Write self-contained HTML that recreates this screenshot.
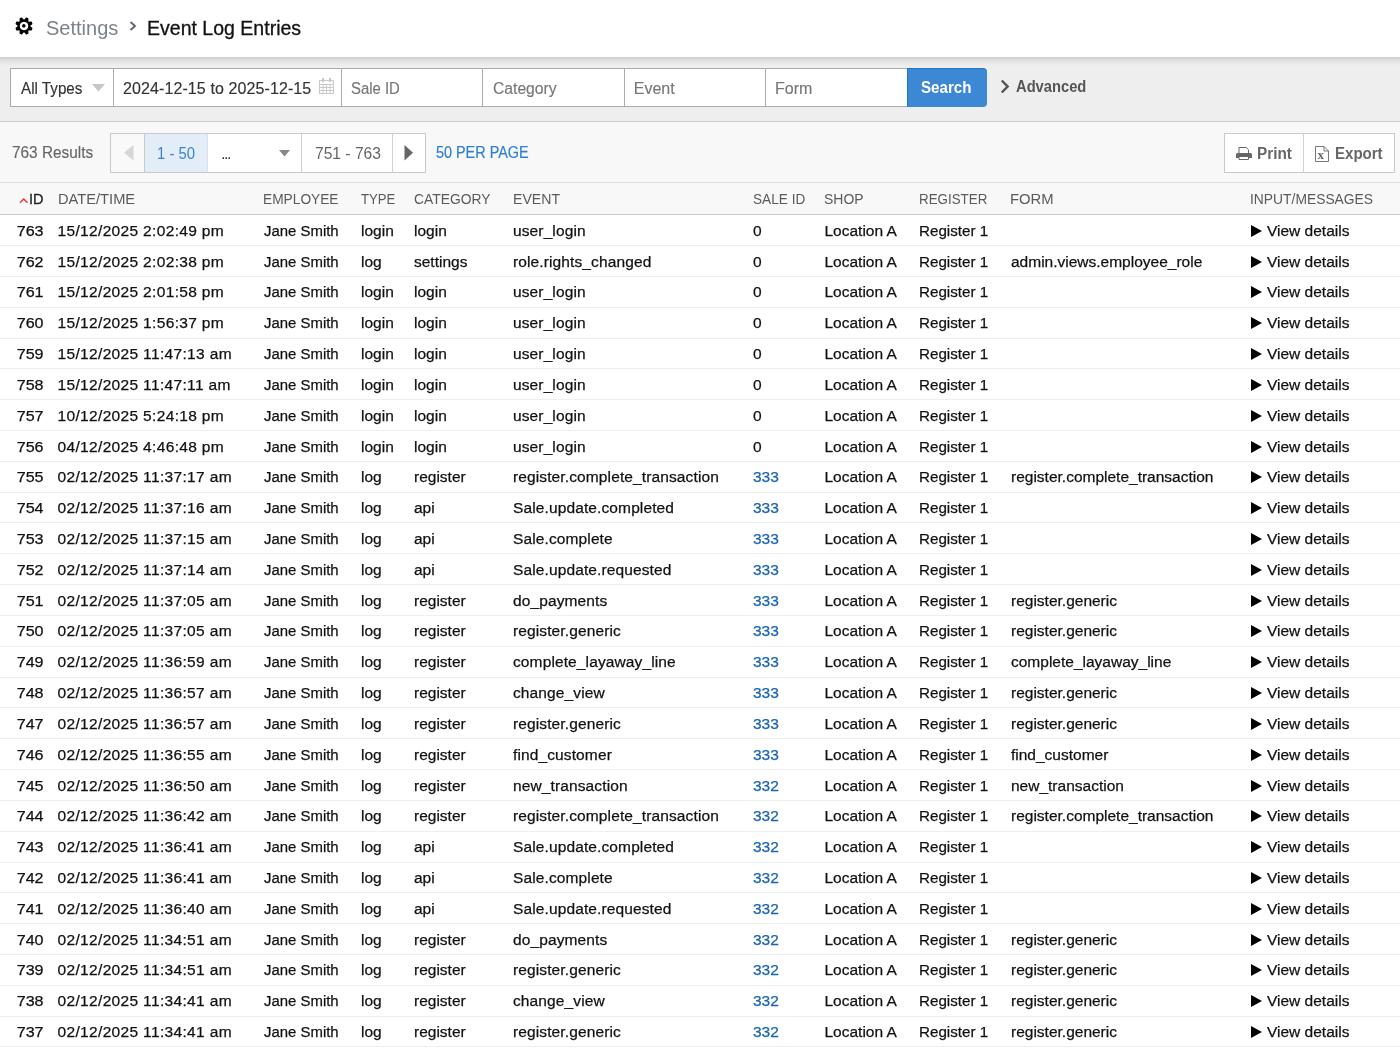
<!DOCTYPE html>
<html>
<head>
<meta charset="utf-8">
<style>
html, body { margin:0; padding:0; }
body { -webkit-font-smoothing:antialiased; will-change:transform; width:1400px; height:1048px; overflow:hidden; position:relative; background:#fff;
  font-family:"Liberation Sans", sans-serif; color:#222; }
.abs { position:absolute; white-space:nowrap; }

/* top header */
#top { position:absolute; left:0; top:0; width:1400px; height:57px; background:#fff; }
#gear { position:absolute; left:15.2px; top:17.2px; width:18px; height:18px; }
#crumb1 { left:46px; top:15px; font-size:20px; line-height:26px; color:#7b8388; }
#chev { position:absolute; left:128px; top:20px; width:10px; height:12px; }
#crumb2 { left:146.5px; top:15px; font-size:20px; line-height:26px; color:#111; -webkit-text-stroke:0.3px #111; transform:scaleX(0.976); transform-origin:0 50%; }

/* filter bar */
#filter { position:absolute; left:0; top:57px; width:1400px; height:64px; background:#eeeeee;
  border-bottom:1px solid #cdcdcd; }
#filter .shadow { position:absolute; left:0; top:0; width:1400px; height:9px;
  background:linear-gradient(to bottom, rgba(0,0,0,0.14), rgba(0,0,0,0.05) 40%, rgba(0,0,0,0)); }
.inp { position:absolute; top:11px; height:39px; background:#fff; border:1px solid #ababab; box-sizing:border-box; }
.inp span { position:absolute; top:0.6px; line-height:37px; font-size:16px; white-space:nowrap; -webkit-text-stroke:0.15px currentColor; }
.ph { color:#777; }
.sx { transform-origin:0 50%; }
#btn-search { position:absolute; left:907px; top:11px; width:80px; height:39px; background:#3d88d5; box-sizing:border-box;
  border-top:1px solid #1f78cf; border-left:1px solid #1f78cf;
  border-radius:0 4px 4px 0; color:#fff; font-weight:bold; font-size:17px; line-height:38px; }
#adv { left:1016px; top:17px; font-size:16px; font-weight:bold; line-height:26px; color:#555; }
#adv-chev { position:absolute; left:1000px; top:22px; width:10px; height:15px; }

/* results bar */
#results { position:absolute; left:0; top:122px; width:1400px; height:60px; background:#f8f8f8;
  border-bottom:1px solid #dedede; }
#rescount { left:12px; top:20px; font-size:16px; line-height:22px; color:#666; -webkit-text-stroke:0.15px #666; }
#pager { position:absolute; left:110px; top:11px; width:314px; height:38px; border:1px solid #c9c9c9; background:#fff; }
.pc { position:absolute; top:0; height:38px; line-height:38px; font-size:16px; white-space:nowrap; box-sizing:border-box; }
#perpage { left:436px; top:20px; font-size:16px; line-height:22px; color:#2f7fd0; -webkit-text-stroke:0.2px #2f7fd0; }
#pe { position:absolute; left:1224px; top:11px; width:169px; height:38px; border:1px solid #c9c9c9; background:#fff; }

/* table header */
#thead { position:absolute; left:0; top:183px; width:1400px; height:31px; background:#f8f8f8;
  border-bottom:1px solid #cccccc; }
.th { position:absolute; top:0; line-height:31px; font-size:15px; color:#5a5a5a; white-space:nowrap; transform-origin:0 50%; }

/* rows */
.row { position:absolute; left:0; width:1400px; height:29.82px; border-bottom:1px solid #efefef; background:#fff; }
.c { position:absolute; top:0.5px; line-height:29.82px; font-size:15.5px; color:#111; white-space:nowrap; -webkit-text-stroke:0.25px #111; }
.c-id { left:0; width:43.6px; text-align:right; transform:scaleX(1.04); transform-origin:100% 50%; }
.c-dt { left:57.5px; letter-spacing:0.34px; }
.c-emp { left:264px; transform:scaleX(0.963); transform-origin:0 50%; }
.c-type { left:361px; }
.c-cat { left:414px; }
.c-ev { left:513px; letter-spacing:0.12px; }
.c-sale { left:753px; }
.c-sale.blue { color:#1a64b3; -webkit-text-stroke-color:#1a64b3; }
.c-shop { left:824.5px; }
.c-reg { left:919px; transform:scaleX(0.98); transform-origin:0 50%; }
.c-form { left:1011px; }
.c-in { left:1251px; }
.tri { display:inline-block; width:0; height:0; border-top:6.5px solid transparent; border-bottom:6.5px solid transparent;
  border-left:11.5px solid #000; margin-right:5px; vertical-align:-1px; }
</style>
</head>
<body>
<div id="top">
  <svg id="gear" viewBox="0 0 20 20">
    <path fill="#000" stroke="#000" stroke-width="1.3" stroke-linejoin="round" fill-rule="evenodd" d="M10.75 3.44 L12.58 1.27 L14.34 2.00 L14.11 4.83 L15.17 5.89 L18.00 5.66 L18.73 7.42 L16.56 9.25 L16.56 10.75 L18.73 12.58 L18.00 14.34 L15.17 14.11 L14.11 15.17 L14.34 18.00 L12.58 18.73 L10.75 16.56 L9.25 16.56 L7.42 18.73 L5.66 18.00 L5.89 15.17 L4.83 14.11 L2.00 14.34 L1.27 12.58 L3.44 10.75 L3.44 9.25 L1.27 7.42 L2.00 5.66 L4.83 5.89 L5.89 4.83 L5.66 2.00 L7.42 1.27 L9.25 3.44Z M10 4.6 a5.4 5.4 0 1 0 0.001 0z M9.8 8.5 a1.3 1.3 0 1 1 -0.001 0z"/>
  </svg>
  <span id="crumb1" class="abs">Settings</span>
  <svg id="chev" viewBox="0 0 10 12"><path d="M2.5 2 L7 6 L2.5 10" fill="none" stroke="#5d6673" stroke-width="1.9"/></svg>
  <span id="crumb2" class="abs">Event Log Entries</span>
</div>

<div id="filter">
  <div class="shadow"></div>
  <div class="inp" style="left:10px; width:104px;"><span class="sx" style="left:10px; color:#333; transform:scaleX(0.95);">All Types</span>
    <svg style="position:absolute; left:81px; top:15px;" width="13" height="8" viewBox="0 0 13 8"><path d="M0 0 H13 L6.5 7.5z" fill="#c6c6c6"/></svg>
  </div>
  <div class="inp" style="left:113px; width:229px;"><span style="left:9px; color:#333; letter-spacing:0.1px;">2024-12-15 to 2025-12-15</span>
    <svg style="position:absolute; left:205px; top:9px;" width="15" height="16" viewBox="0 0 15 16">
      <g fill="none" stroke="#c8c8c8" stroke-width="1"><rect x="0.5" y="2.5" width="14" height="13"/><path d="M0.5 6.5H14.5M0.5 9.5H14.5M0.5 12.5H14.5M4 6.5V15.5M7.5 6.5V15.5M11 6.5V15.5"/></g>
      <rect x="3" y="0" width="2" height="4" fill="#c8c8c8"/><rect x="10" y="0" width="2" height="4" fill="#c8c8c8"/>
    </svg>
  </div>
  <div class="inp" style="left:341px; width:142px;"><span class="ph sx" style="left:9.3px; transform:scaleX(0.93);">Sale ID</span></div>
  <div class="inp" style="left:482px; width:143px;"><span class="ph sx" style="left:9.5px; transform:scaleX(0.98);">Category</span></div>
  <div class="inp" style="left:624px; width:142px;"><span class="ph" style="left:8.8px;">Event</span></div>
  <div class="inp" style="left:765px; width:143px;"><span class="ph" style="left:9px;">Form</span></div>
  <div id="btn-search"><span class="sx" style="position:absolute; left:13px; top:-0.5px; transform:scaleX(0.89);">Search</span></div>
  <svg id="adv-chev" viewBox="0 0 10 15"><path d="M1.8 1.5 L7.6 7.5 L1.8 13.5" fill="none" stroke="#555" stroke-width="2.5"/></svg>
  <span id="adv" class="abs sx" style="transform:scaleX(0.92);">Advanced</span>
</div>

<div id="results">
  <span id="rescount" class="abs sx" style="transform:scaleX(0.96);">763 Results</span>
  <div id="pager">
    <div class="pc" style="left:0; width:34px; background:#f9f9f9; border-right:1px solid #c9c9c9;">
      <svg style="position:absolute; left:12.5px; top:11px;" width="10" height="16" viewBox="0 0 10 16"><path d="M9.5 0 V15.5 L0 7.75z" fill="#d6d6d6"/></svg>
    </div>
    <div class="pc" style="left:34px; width:63px; background:#e3edf8; color:#3a84cc; text-align:center; border-right:1px solid #d9e1ea;"><span class="sx" style="position:absolute; left:12px; top:1px; transform:scaleX(0.93);">1 - 50</span></div>
    <div class="pc" style="left:97px; width:94px; background:#fff; color:#333;"><span style="position:absolute; left:13px; top:1px; letter-spacing:-1.4px;">...</span>
      <svg style="position:absolute; left:70.5px; top:16px;" width="11" height="7" viewBox="0 0 11 7"><path d="M0 0 H11 L5.5 6.5z" fill="#888"/></svg>
    </div>
    <div class="pc" style="left:190px; width:92px; background:#fff; color:#666; border-left:1px solid #d0d0d0; border-right:1px solid #d0d0d0;"><span class="sx" style="position:absolute; left:12.5px; top:1px; transform:scaleX(0.975);">751 - 763</span></div>
    <div class="pc" style="left:282px; width:32px; background:#fff;">
      <svg style="position:absolute; left:11px; top:11px;" width="10" height="16" viewBox="0 0 10 16"><path d="M0.5 0 V15.5 L9 7.75z" fill="#666"/></svg>
    </div>
  </div>
  <span id="perpage" class="abs sx" style="transform:scaleX(0.9);">50 PER PAGE</span>
  <div id="pe">
    <div class="pc" style="left:0; width:79px; border-right:1px solid #d0d0d0; color:#666; font-weight:bold;">
      <svg style="position:absolute; left:11px; top:13px;" width="16" height="14" viewBox="0 0 16 14">
        <path d="M3 6.5V0.5H10.2L12.5 2.8V6.5" fill="none" stroke="#666" stroke-width="1"/>
        <path fill="#666" d="M1.5 6h13a1.5 1.5 0 0 1 1.5 1.5V11H0V7.5A1.5 1.5 0 0 1 1.5 6z"/>
        <path d="M3 10V12.5H12.5V10" fill="#fff" stroke="#666" stroke-width="1"/>
      </svg>
      <span class="sx" style="position:absolute; left:32px; top:1px; transform:scaleX(0.956);">Print</span>
    </div>
    <div class="pc" style="left:80px; width:90px; color:#666; font-weight:bold;">
      <svg style="position:absolute; left:10px; top:12px;" width="14" height="16" viewBox="0 0 14 16">
        <path d="M0.5 0.5H9L13.5 5V15.5H0.5z M9 0.5V5H13.5" fill="none" stroke="#777" stroke-width="1"/>
        <text x="2.6" y="13.2" font-family="Liberation Serif" font-size="13" fill="#666">x</text>
      </svg>
      <span class="sx" style="position:absolute; left:30px; top:1px; transform:scaleX(0.94);">Export</span>
    </div>
  </div>
</div>

<div id="thead">
  <svg style="position:absolute; left:19px; top:14px;" width="10" height="7" viewBox="0 0 10 7"><path d="M0.9 5.8 L4.7 2 L8.5 5.8" fill="none" stroke="#f5363a" stroke-width="1.45"/></svg>
  <span class="th" style="left:28.5px; color:#222; -webkit-text-stroke:0.3px #222; transform:scaleX(0.97);">ID</span>
  <span class="th" style="left:57.5px; transform:scaleX(0.978);">DATE/TIME</span>
  <span class="th" style="left:263px; transform:scaleX(0.915);">EMPLOYEE</span>
  <span class="th" style="left:361px; transform:scaleX(0.877);">TYPE</span>
  <span class="th" style="left:414px; transform:scaleX(0.924);">CATEGORY</span>
  <span class="th" style="left:512.5px; transform:scaleX(0.941);">EVENT</span>
  <span class="th" style="left:752.5px; transform:scaleX(0.909);">SALE ID</span>
  <span class="th" style="left:823.5px; transform:scaleX(0.931);">SHOP</span>
  <span class="th" style="left:918.5px; transform:scaleX(0.891);">REGISTER</span>
  <span class="th" style="left:1010px; transform:scaleX(0.988);">FORM</span>
  <span class="th" style="left:1249.5px; transform:scaleX(0.923);">INPUT/MESSAGES</span>
</div>

<div class="row" style="top:215.300px"><span class="c c-id">763</span><span class="c c-dt">15/12/2025 2:02:49 pm</span><span class="c c-emp">Jane Smith</span><span class="c c-type">login</span><span class="c c-cat">login</span><span class="c c-ev">user_login</span><span class="c c-sale">0</span><span class="c c-shop">Location A</span><span class="c c-reg">Register 1</span><span class="c c-form"></span><span class="c c-in"><i class="tri"></i>View details</span></div>
<div class="row" style="top:246.120px"><span class="c c-id">762</span><span class="c c-dt">15/12/2025 2:02:38 pm</span><span class="c c-emp">Jane Smith</span><span class="c c-type">log</span><span class="c c-cat">settings</span><span class="c c-ev">role.rights_changed</span><span class="c c-sale">0</span><span class="c c-shop">Location A</span><span class="c c-reg">Register 1</span><span class="c c-form">admin.views.employee_role</span><span class="c c-in"><i class="tri"></i>View details</span></div>
<div class="row" style="top:276.940px"><span class="c c-id">761</span><span class="c c-dt">15/12/2025 2:01:58 pm</span><span class="c c-emp">Jane Smith</span><span class="c c-type">login</span><span class="c c-cat">login</span><span class="c c-ev">user_login</span><span class="c c-sale">0</span><span class="c c-shop">Location A</span><span class="c c-reg">Register 1</span><span class="c c-form"></span><span class="c c-in"><i class="tri"></i>View details</span></div>
<div class="row" style="top:307.760px"><span class="c c-id">760</span><span class="c c-dt">15/12/2025 1:56:37 pm</span><span class="c c-emp">Jane Smith</span><span class="c c-type">login</span><span class="c c-cat">login</span><span class="c c-ev">user_login</span><span class="c c-sale">0</span><span class="c c-shop">Location A</span><span class="c c-reg">Register 1</span><span class="c c-form"></span><span class="c c-in"><i class="tri"></i>View details</span></div>
<div class="row" style="top:338.580px"><span class="c c-id">759</span><span class="c c-dt">15/12/2025 11:47:13 am</span><span class="c c-emp">Jane Smith</span><span class="c c-type">login</span><span class="c c-cat">login</span><span class="c c-ev">user_login</span><span class="c c-sale">0</span><span class="c c-shop">Location A</span><span class="c c-reg">Register 1</span><span class="c c-form"></span><span class="c c-in"><i class="tri"></i>View details</span></div>
<div class="row" style="top:369.400px"><span class="c c-id">758</span><span class="c c-dt">15/12/2025 11:47:11 am</span><span class="c c-emp">Jane Smith</span><span class="c c-type">login</span><span class="c c-cat">login</span><span class="c c-ev">user_login</span><span class="c c-sale">0</span><span class="c c-shop">Location A</span><span class="c c-reg">Register 1</span><span class="c c-form"></span><span class="c c-in"><i class="tri"></i>View details</span></div>
<div class="row" style="top:400.220px"><span class="c c-id">757</span><span class="c c-dt">10/12/2025 5:24:18 pm</span><span class="c c-emp">Jane Smith</span><span class="c c-type">login</span><span class="c c-cat">login</span><span class="c c-ev">user_login</span><span class="c c-sale">0</span><span class="c c-shop">Location A</span><span class="c c-reg">Register 1</span><span class="c c-form"></span><span class="c c-in"><i class="tri"></i>View details</span></div>
<div class="row" style="top:431.040px"><span class="c c-id">756</span><span class="c c-dt">04/12/2025 4:46:48 pm</span><span class="c c-emp">Jane Smith</span><span class="c c-type">login</span><span class="c c-cat">login</span><span class="c c-ev">user_login</span><span class="c c-sale">0</span><span class="c c-shop">Location A</span><span class="c c-reg">Register 1</span><span class="c c-form"></span><span class="c c-in"><i class="tri"></i>View details</span></div>
<div class="row" style="top:461.860px"><span class="c c-id">755</span><span class="c c-dt">02/12/2025 11:37:17 am</span><span class="c c-emp">Jane Smith</span><span class="c c-type">log</span><span class="c c-cat">register</span><span class="c c-ev">register.complete_transaction</span><span class="c c-sale blue">333</span><span class="c c-shop">Location A</span><span class="c c-reg">Register 1</span><span class="c c-form">register.complete_transaction</span><span class="c c-in"><i class="tri"></i>View details</span></div>
<div class="row" style="top:492.680px"><span class="c c-id">754</span><span class="c c-dt">02/12/2025 11:37:16 am</span><span class="c c-emp">Jane Smith</span><span class="c c-type">log</span><span class="c c-cat">api</span><span class="c c-ev">Sale.update.completed</span><span class="c c-sale blue">333</span><span class="c c-shop">Location A</span><span class="c c-reg">Register 1</span><span class="c c-form"></span><span class="c c-in"><i class="tri"></i>View details</span></div>
<div class="row" style="top:523.500px"><span class="c c-id">753</span><span class="c c-dt">02/12/2025 11:37:15 am</span><span class="c c-emp">Jane Smith</span><span class="c c-type">log</span><span class="c c-cat">api</span><span class="c c-ev">Sale.complete</span><span class="c c-sale blue">333</span><span class="c c-shop">Location A</span><span class="c c-reg">Register 1</span><span class="c c-form"></span><span class="c c-in"><i class="tri"></i>View details</span></div>
<div class="row" style="top:554.320px"><span class="c c-id">752</span><span class="c c-dt">02/12/2025 11:37:14 am</span><span class="c c-emp">Jane Smith</span><span class="c c-type">log</span><span class="c c-cat">api</span><span class="c c-ev">Sale.update.requested</span><span class="c c-sale blue">333</span><span class="c c-shop">Location A</span><span class="c c-reg">Register 1</span><span class="c c-form"></span><span class="c c-in"><i class="tri"></i>View details</span></div>
<div class="row" style="top:585.140px"><span class="c c-id">751</span><span class="c c-dt">02/12/2025 11:37:05 am</span><span class="c c-emp">Jane Smith</span><span class="c c-type">log</span><span class="c c-cat">register</span><span class="c c-ev">do_payments</span><span class="c c-sale blue">333</span><span class="c c-shop">Location A</span><span class="c c-reg">Register 1</span><span class="c c-form">register.generic</span><span class="c c-in"><i class="tri"></i>View details</span></div>
<div class="row" style="top:615.960px"><span class="c c-id">750</span><span class="c c-dt">02/12/2025 11:37:05 am</span><span class="c c-emp">Jane Smith</span><span class="c c-type">log</span><span class="c c-cat">register</span><span class="c c-ev">register.generic</span><span class="c c-sale blue">333</span><span class="c c-shop">Location A</span><span class="c c-reg">Register 1</span><span class="c c-form">register.generic</span><span class="c c-in"><i class="tri"></i>View details</span></div>
<div class="row" style="top:646.780px"><span class="c c-id">749</span><span class="c c-dt">02/12/2025 11:36:59 am</span><span class="c c-emp">Jane Smith</span><span class="c c-type">log</span><span class="c c-cat">register</span><span class="c c-ev">complete_layaway_line</span><span class="c c-sale blue">333</span><span class="c c-shop">Location A</span><span class="c c-reg">Register 1</span><span class="c c-form">complete_layaway_line</span><span class="c c-in"><i class="tri"></i>View details</span></div>
<div class="row" style="top:677.600px"><span class="c c-id">748</span><span class="c c-dt">02/12/2025 11:36:57 am</span><span class="c c-emp">Jane Smith</span><span class="c c-type">log</span><span class="c c-cat">register</span><span class="c c-ev">change_view</span><span class="c c-sale blue">333</span><span class="c c-shop">Location A</span><span class="c c-reg">Register 1</span><span class="c c-form">register.generic</span><span class="c c-in"><i class="tri"></i>View details</span></div>
<div class="row" style="top:708.420px"><span class="c c-id">747</span><span class="c c-dt">02/12/2025 11:36:57 am</span><span class="c c-emp">Jane Smith</span><span class="c c-type">log</span><span class="c c-cat">register</span><span class="c c-ev">register.generic</span><span class="c c-sale blue">333</span><span class="c c-shop">Location A</span><span class="c c-reg">Register 1</span><span class="c c-form">register.generic</span><span class="c c-in"><i class="tri"></i>View details</span></div>
<div class="row" style="top:739.240px"><span class="c c-id">746</span><span class="c c-dt">02/12/2025 11:36:55 am</span><span class="c c-emp">Jane Smith</span><span class="c c-type">log</span><span class="c c-cat">register</span><span class="c c-ev">find_customer</span><span class="c c-sale blue">333</span><span class="c c-shop">Location A</span><span class="c c-reg">Register 1</span><span class="c c-form">find_customer</span><span class="c c-in"><i class="tri"></i>View details</span></div>
<div class="row" style="top:770.060px"><span class="c c-id">745</span><span class="c c-dt">02/12/2025 11:36:50 am</span><span class="c c-emp">Jane Smith</span><span class="c c-type">log</span><span class="c c-cat">register</span><span class="c c-ev">new_transaction</span><span class="c c-sale blue">332</span><span class="c c-shop">Location A</span><span class="c c-reg">Register 1</span><span class="c c-form">new_transaction</span><span class="c c-in"><i class="tri"></i>View details</span></div>
<div class="row" style="top:800.880px"><span class="c c-id">744</span><span class="c c-dt">02/12/2025 11:36:42 am</span><span class="c c-emp">Jane Smith</span><span class="c c-type">log</span><span class="c c-cat">register</span><span class="c c-ev">register.complete_transaction</span><span class="c c-sale blue">332</span><span class="c c-shop">Location A</span><span class="c c-reg">Register 1</span><span class="c c-form">register.complete_transaction</span><span class="c c-in"><i class="tri"></i>View details</span></div>
<div class="row" style="top:831.700px"><span class="c c-id">743</span><span class="c c-dt">02/12/2025 11:36:41 am</span><span class="c c-emp">Jane Smith</span><span class="c c-type">log</span><span class="c c-cat">api</span><span class="c c-ev">Sale.update.completed</span><span class="c c-sale blue">332</span><span class="c c-shop">Location A</span><span class="c c-reg">Register 1</span><span class="c c-form"></span><span class="c c-in"><i class="tri"></i>View details</span></div>
<div class="row" style="top:862.520px"><span class="c c-id">742</span><span class="c c-dt">02/12/2025 11:36:41 am</span><span class="c c-emp">Jane Smith</span><span class="c c-type">log</span><span class="c c-cat">api</span><span class="c c-ev">Sale.complete</span><span class="c c-sale blue">332</span><span class="c c-shop">Location A</span><span class="c c-reg">Register 1</span><span class="c c-form"></span><span class="c c-in"><i class="tri"></i>View details</span></div>
<div class="row" style="top:893.340px"><span class="c c-id">741</span><span class="c c-dt">02/12/2025 11:36:40 am</span><span class="c c-emp">Jane Smith</span><span class="c c-type">log</span><span class="c c-cat">api</span><span class="c c-ev">Sale.update.requested</span><span class="c c-sale blue">332</span><span class="c c-shop">Location A</span><span class="c c-reg">Register 1</span><span class="c c-form"></span><span class="c c-in"><i class="tri"></i>View details</span></div>
<div class="row" style="top:924.160px"><span class="c c-id">740</span><span class="c c-dt">02/12/2025 11:34:51 am</span><span class="c c-emp">Jane Smith</span><span class="c c-type">log</span><span class="c c-cat">register</span><span class="c c-ev">do_payments</span><span class="c c-sale blue">332</span><span class="c c-shop">Location A</span><span class="c c-reg">Register 1</span><span class="c c-form">register.generic</span><span class="c c-in"><i class="tri"></i>View details</span></div>
<div class="row" style="top:954.980px"><span class="c c-id">739</span><span class="c c-dt">02/12/2025 11:34:51 am</span><span class="c c-emp">Jane Smith</span><span class="c c-type">log</span><span class="c c-cat">register</span><span class="c c-ev">register.generic</span><span class="c c-sale blue">332</span><span class="c c-shop">Location A</span><span class="c c-reg">Register 1</span><span class="c c-form">register.generic</span><span class="c c-in"><i class="tri"></i>View details</span></div>
<div class="row" style="top:985.800px"><span class="c c-id">738</span><span class="c c-dt">02/12/2025 11:34:41 am</span><span class="c c-emp">Jane Smith</span><span class="c c-type">log</span><span class="c c-cat">register</span><span class="c c-ev">change_view</span><span class="c c-sale blue">332</span><span class="c c-shop">Location A</span><span class="c c-reg">Register 1</span><span class="c c-form">register.generic</span><span class="c c-in"><i class="tri"></i>View details</span></div>
<div class="row" style="top:1016.620px"><span class="c c-id">737</span><span class="c c-dt">02/12/2025 11:34:41 am</span><span class="c c-emp">Jane Smith</span><span class="c c-type">log</span><span class="c c-cat">register</span><span class="c c-ev">register.generic</span><span class="c c-sale blue">332</span><span class="c c-shop">Location A</span><span class="c c-reg">Register 1</span><span class="c c-form">register.generic</span><span class="c c-in"><i class="tri"></i>View details</span></div>
<div class="row" style="top:1047.440px"><span class="c c-id">736</span><span class="c c-dt">02/12/2025 11:34:40 am</span><span class="c c-emp">Jane Smith</span><span class="c c-type">log</span><span class="c c-cat">register</span><span class="c c-ev">find_customer</span><span class="c c-sale blue">332</span><span class="c c-shop">Location A</span><span class="c c-reg">Register 1</span><span class="c c-form">find_customer</span><span class="c c-in"><i class="tri"></i>View details</span></div>
</body>
</html>
